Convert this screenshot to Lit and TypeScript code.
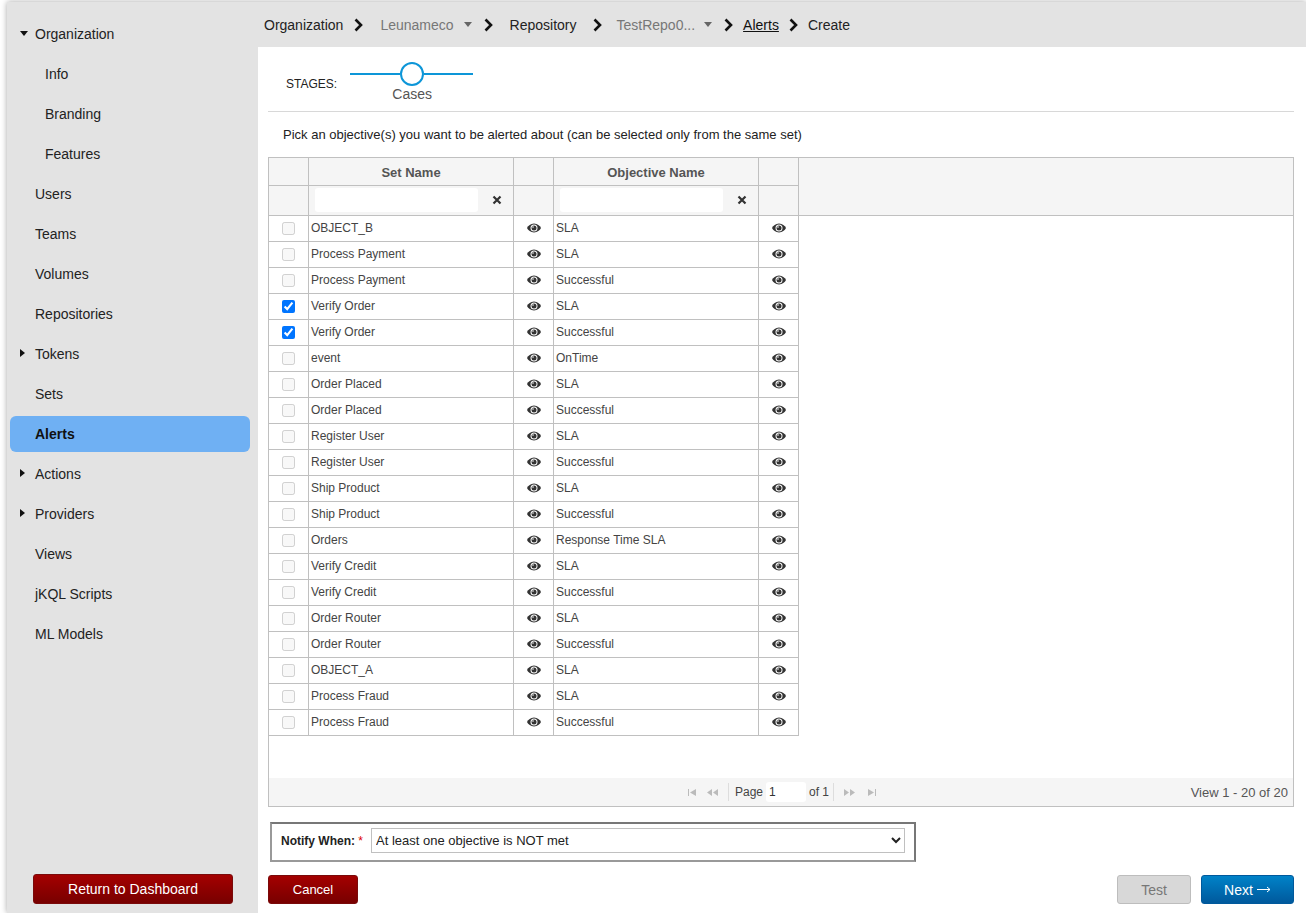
import { LitElement, html, css, svg } from 'lit';
import { customElement } from 'lit/decorators.js';

const NAV = [
  { label: 'Organization', caret: 'down' },
  { label: 'Info', sub: true },
  { label: 'Branding', sub: true },
  { label: 'Features', sub: true },
  { label: 'Users' },
  { label: 'Teams' },
  { label: 'Volumes' },
  { label: 'Repositories' },
  { label: 'Tokens', caret: 'right' },
  { label: 'Sets' },
  { label: 'Alerts', active: true },
  { label: 'Actions', caret: 'right' },
  { label: 'Providers', caret: 'right' },
  { label: 'Views' },
  { label: 'jKQL Scripts' },
  { label: 'ML Models' },
];

const ROWS: [string, string, boolean?][] = [
  ['OBJECT_B', 'SLA'],
  ['Process Payment', 'SLA'],
  ['Process Payment', 'Successful'],
  ['Verify Order', 'SLA', true],
  ['Verify Order', 'Successful', true],
  ['event', 'OnTime'],
  ['Order Placed', 'SLA'],
  ['Order Placed', 'Successful'],
  ['Register User', 'SLA'],
  ['Register User', 'Successful'],
  ['Ship Product', 'SLA'],
  ['Ship Product', 'Successful'],
  ['Orders', 'Response Time SLA'],
  ['Verify Credit', 'SLA'],
  ['Verify Credit', 'Successful'],
  ['Order Router', 'SLA'],
  ['Order Router', 'Successful'],
  ['OBJECT_A', 'SLA'],
  ['Process Fraud', 'SLA'],
  ['Process Fraud', 'Successful'],
];

const eye = html`<svg class="eye" width="14" height="10" viewBox="0 0 14 10">
  <path fill="#333" d="M7 .5C3.600.5 1.200 2.800 0 5c1.200 2.200 3.600 4.500 7 4.500s5.800-2.300 7-4.500C12.800 2.800 10.400.5 7 .5z" />
  <circle cx="7" cy="5" r="3.500" fill="#fff" />
  <circle cx="7" cy="5" r="2.500" fill="#333" />
  <circle cx="6" cy="4" r=".8" fill="#fff" />
</svg>`;

const cross = html`<svg width="10" height="10" viewBox="0 0 10 10">
  <path d="M1.500 1.500l7 7M8.500 1.500l-7 7" stroke="#333" stroke-width="2.200" fill="none" />
</svg>`;

const chevron = (cls = '') => html`<svg class=${cls} width="9" height="14" viewBox="0 0 9 14">
  <path d="M1.500 1.500L7 7l-5.500 5.500" stroke="#111" stroke-width="2.600" fill="none" />
</svg>`;

const caretDown = (cls = '') => html`<svg class=${cls} width="8" height="5" viewBox="0 0 8 5">
  <path d="M0 0h8L4 5z" fill="#666" />
</svg>`;

const pagerIcon = (shape: string, cls = '') => html`<svg class=${cls} width="11" height="7" viewBox="0 0 11 7">
  ${svg`<path d=${shape} fill="#bbb" />`}
</svg>`;

const arrow = html`<svg class="m4" width="14" height="7" viewBox="0 0 14 7">
  <path d="M0 3.500h13M10 1l3 2.500L10 6" stroke="#fff" stroke-width="1" fill="none" />
</svg>`;

@customElement('app-root')
export class AppRoot extends LitElement {
  static styles = css`
    :host {
      display: block;
      width: 1306px;
      height: 913px;
      overflow: hidden;
      background: #fff;
      font-family: 'Liberation Sans', Arial, sans-serif;
      color: #222;
    }

    .shell {
      display: flex;
      height: 911px;
      margin: 2px 0 0 7px;
      box-shadow: 0 0 6px rgba(0, 0, 0, 0.35);
      background: #fff;
    }

    .sidebar {
      display: flex;
      flex-direction: column;
      flex: 0 0 251px;
      box-sizing: border-box;
      padding: 12px 8px 9px 3px;
      background: #e3e3e3;
      font-size: 14px;
    }

    .nav-item {
      display: flex;
      align-items: center;
      position: relative;
      height: 36px;
      margin: 2px 0;
      padding-left: 25px;
      border-radius: 6px;
      color: #222;
    }

    .nav-item.sub {
      padding-left: 35px;
    }

    .nav-item.active {
      background: #6fb0f3;
      font-weight: bold;
      color: #111;
    }

    .caret {
      position: absolute;
      left: 10px;
      width: 0;
      height: 0;
    }

    .caret.down {
      top: 15px;
      border-left: 4.500px solid transparent;
      border-right: 4.500px solid transparent;
      border-top: 5px solid #111;
    }

    .caret.right {
      top: 13px;
      border-top: 4.500px solid transparent;
      border-bottom: 4.500px solid transparent;
      border-left: 5px solid #111;
    }

    .btn {
      display: flex;
      align-items: center;
      justify-content: center;
      box-sizing: border-box;
      height: 29px;
      border-radius: 3px;
      font-size: 14px;
      color: #fff;
    }

    .btn.red {
      background: linear-gradient(#a40000, #780000);
      border: 1px solid #7a0a0a;
    }

    .btn.blue {
      width: 93px;
      background: linear-gradient(#0082c8, #00599c);
      border: 1px solid #00599c;
    }

    .btn.grey {
      width: 74px;
      margin-right: 10px;
      background: #d8d8d8;
      border: 1px solid #bdbdbd;
      color: #777;
    }

    .btn.back {
      width: 200px;
      height: 30px;
      margin: auto 0 0 23px;
    }

    .btn.cancel {
      width: 90px;
      font-size: 13px;
    }

    .main {
      flex: 1;
      min-width: 0;
      display: flex;
      flex-direction: column;
    }

    .crumbs {
      display: flex;
      align-items: center;
      height: 45px;
      padding-left: 6px;
      background: #e3e3e3;
      font-size: 14px;
      color: #222;
    }

    .crumbs .muted {
      color: #777;
    }

    .crumbs .link {
      color: #111;
      text-decoration: underline;
    }

    .m4 { margin-left: 4px; }
    .m6 { margin-left: 6px; }
    .m9 { margin-left: 9px; }
    .m10 { margin-left: 10px; }
    .m11 { margin-left: 11px; }
    .m12 { margin-left: 12px; }
    .m14 { margin-left: 14px; }
    .m17 { margin-left: 17px; }

    .content {
      flex: 1;
      display: flex;
      flex-direction: column;
      padding: 0 12px 0 10px;
    }

    .stages {
      display: flex;
      box-sizing: border-box;
      height: 65px;
      padding: 15px 0 0 18px;
      border-bottom: 1px solid #d8d8d8;
      font-size: 12px;
    }

    .stages-label {
      margin-top: 15px;
      line-height: 14px;
      color: #222;
    }

    .slider {
      display: flex;
      flex-direction: column;
      align-items: center;
      width: 123px;
      margin-left: 13px;
      font-size: 14px;
      line-height: 16px;
      color: #555;
    }

    .slider span {
      padding-left: 1px;
    }

    .track {
      display: flex;
      align-items: center;
      width: 100%;
    }

    .track i {
      flex: 1;
      height: 2px;
      background: #0d96d8;
    }

    .track b {
      box-sizing: border-box;
      width: 24px;
      height: 24px;
      border: 2.500px solid #0d96d8;
      border-radius: 50%;
      background: #fff;
    }

    .hint {
      margin: 15px 0 14px 15px;
      font-size: 13px;
      line-height: 16px;
      color: #222;
    }

    .grid {
      display: flex;
      flex-direction: column;
      box-sizing: border-box;
      height: 650px;
      border: 1px solid #c0c0c0;
      font-size: 12px;
      color: #444;
    }

    .head {
      display: grid;
      grid-template-columns: 40px 205px 40px 205px 40px 1fr;
      grid-template-rows: 28px 29px;
      background: #f5f5f5;
      border-bottom: 1px solid #c0c0c0;
    }

    .head > div {
      display: flex;
      align-items: center;
      box-sizing: border-box;
      border-right: 1px solid #c0c0c0;
    }

    .head .top {
      justify-content: center;
      padding-top: 2px;
      border-bottom: 1px solid #c0c0c0;
      font-size: 13px;
      font-weight: bold;
      color: #555;
    }

    .head .rest {
      grid-column: 6;
      grid-row: 1 / span 2;
      border-right: 0;
    }

    .head .filter {
      padding: 0 0 2px 6px;
    }

    .head input {
      box-sizing: border-box;
      width: 163px;
      height: 24px;
      border: 0;
      border-radius: 3px;
      background: #fff;
    }

    .head svg {
      margin-left: 14px;
    }

    .body {
      flex: 1;
    }

    .row {
      display: grid;
      grid-template-columns: 40px 205px 40px 205px 40px;
      width: 530px;
      height: 26px;
    }

    .row > div {
      display: flex;
      align-items: center;
      box-sizing: border-box;
      border-right: 1px solid #c0c0c0;
      border-bottom: 1px solid #c0c0c0;
      padding: 0 0 2px 2px;
      white-space: nowrap;
    }

    .row > .mid {
      justify-content: center;
      padding-left: 0;
    }

    .row > .check {
      justify-content: center;
      padding: 0;
    }

    .row input {
      width: 13px;
      height: 13px;
      margin: 0;
    }

    .pager {
      display: grid;
      grid-template-columns: 1fr auto 1fr;
      align-items: center;
      height: 28px;
      background: #f5f5f5;
      color: #555;
    }

    .pager-mid {
      display: flex;
      align-items: center;
      padding-left: 2px;
    }

    .pager-mid span {
      color: #444;
    }

    .pager-mid input {
      box-sizing: border-box;
      width: 40px;
      height: 20px;
      margin: 0 3px;
      padding: 0 3px;
      border: 0;
      border-radius: 3px;
      background: #fff;
      font: 12px 'Liberation Sans', Arial, sans-serif;
      color: #333;
    }

    .sep {
      width: 1px;
      height: 18px;
      background: #ddd;
    }

    .view {
      justify-self: end;
      padding-right: 5px;
      font-size: 13px;
    }

    .notify {
      display: flex;
      align-items: center;
      box-sizing: border-box;
      width: 646px;
      height: 40px;
      margin: 15px 0 0 2px;
      padding: 0 0 3px 9px;
      border: 2px solid #777;
      border-color: #777 #777 #999 #999;
      font-size: 12px;
    }

    .notify label {
      width: 90px;
      font-weight: bold;
      color: #222;
    }

    .notify em {
      font-style: normal;
      font-weight: normal;
      color: #d00;
    }

    .notify select {
      box-sizing: border-box;
      width: 534px;
      height: 25px;
      padding-left: 0;
      border: 1px solid #c0c0c0;
      border-radius: 0;
      background: #fff;
      font: 13px 'Liberation Sans', Arial, sans-serif;
      color: #222;
    }

    .actions {
      display: flex;
      align-items: center;
      margin-top: 13px;
    }

    .spacer {
      flex: 1;
    }
  `;

  render() {
    return html`
      <div class="shell">
        <aside class="sidebar">
          ${NAV.map(
            (n) => html`
              <div class="nav-item ${n.sub ? 'sub' : ''} ${n.active ? 'active' : ''}">
                ${n.caret ? html`<span class="caret ${n.caret}"></span>` : ''} ${n.label}
              </div>
            `
          )}
          <div class="btn red back">Return to Dashboard</div>
        </aside>
        <div class="main">
          <nav class="crumbs">
            <span>Organization</span>
            ${chevron('m11')}
            <span class="muted m17">Leunameco</span>
            ${caretDown('m10')} ${chevron('m12')}
            <span class="m17">Repository</span>
            ${chevron('m17')}
            <span class="muted m14">TestRepo0...</span>
            ${caretDown('m9')} ${chevron('m12')}
            <span class="link m10">Alerts</span>
            ${chevron('m10')}
            <span class="m10">Create</span>
          </nav>
          <div class="content">
            <div class="stages">
              <span class="stages-label">STAGES:</span>
              <div class="slider">
                <div class="track"><i></i><b></b><i></i></div>
                <span>Cases</span>
              </div>
            </div>
            <div class="hint">Pick an objective(s) you want to be alerted about (can be selected only from the same set)</div>
            <div class="grid">
              <div class="head">
                <div class="top"></div>
                <div class="top">Set Name</div>
                <div class="top"></div>
                <div class="top">Objective Name</div>
                <div class="top"></div>
                <div class="rest"></div>
                <div></div>
                <div class="filter"><input type="text" />${cross}</div>
                <div></div>
                <div class="filter"><input type="text" />${cross}</div>
                <div></div>
              </div>
              <div class="body">
                ${ROWS.map(
                  ([set, objective, checked]) => html`
                    <div class="row">
                      <div class="check">
                        <input type="checkbox" ?checked=${checked} ?disabled=${!checked} />
                      </div>
                      <div>${set}</div>
                      <div class="mid">${eye}</div>
                      <div>${objective}</div>
                      <div class="mid">${eye}</div>
                    </div>
                  `
                )}
              </div>
              <div class="pager">
                <span></span>
                <div class="pager-mid">
                  ${pagerIcon('M1 0h1v7H1zM9 0v7L3 3.500z')}
                  ${pagerIcon('M5 0v7L0 3.500zM11 0v7L6 3.500z', 'm9')}
                  <i class="sep m10"></i>
                  <span class="m6">Page</span>
                  <input type="text" value="1" />
                  <span>of 1</span>
                  <i class="sep m4"></i>
                  ${pagerIcon('M0 0v7l5-3.500zM6 0v7l5-3.500z', 'm10')}
                  ${pagerIcon('M2 0v7l6-3.500zM9 0h1v7H9z', 'm11')}
                </div>
                <span class="view">View 1 - 20 of 20</span>
              </div>
            </div>
            <div class="notify">
              <label>Notify When: <em>*</em></label>
              <select>
                <option>At least one objective is NOT met</option>
              </select>
            </div>
            <div class="actions">
              <div class="btn red cancel">Cancel</div>
              <span class="spacer"></span>
              <div class="btn grey">Test</div>
              <div class="btn blue">Next${arrow}</div>
            </div>
          </div>
        </div>
      </div>
    `;
  }
}
